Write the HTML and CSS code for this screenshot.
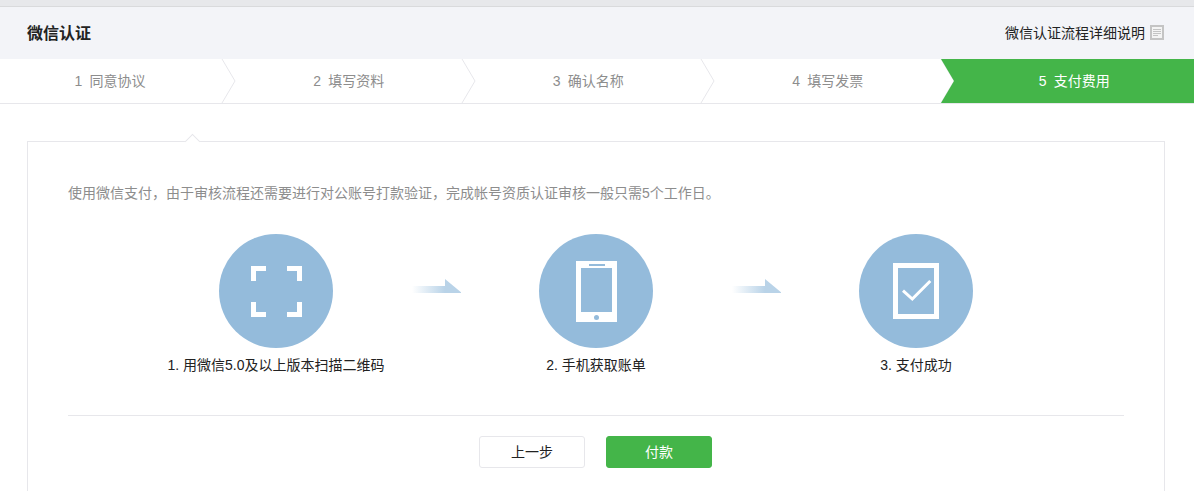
FILE: index.html
```html
<!DOCTYPE html>
<html>
<head>
  <meta charset="UTF-8" />
  <title>微信认证</title>
  <link rel="stylesheet" href="styles.css">
</head>
<body>

<div class="top-strip"></div>

<div class="page-head">
  <h1>微信认证</h1>
  <a class="help-link" href="#">
    微信认证流程详细说明
    <svg class="doc-icon" width="14" height="15" viewBox="0 0 14 15">
      <rect x="0" y="0" width="14" height="15" fill="#c4c4c4" />
      <rect x="2" y="2" width="10" height="11" fill="#f4f4f4" />
      <path d="M3 4.5h8M3 6.5h8M3 8.5h8M3 10.5h5" stroke="#c4c4c4" stroke-width="1" />
    </svg>
  </a>
</div>

<div class="steps">
  <div class="step"><span class="num">1</span>同意协议
    <svg class="chevron" width="15" height="44" viewBox="0 0 15 44"><path d="M1 0L14 22L1 44" fill="#fff" stroke="#e7e7eb" /></svg>
  </div>
  <div class="step"><span class="num">2</span>填写资料
    <svg class="chevron" width="15" height="44" viewBox="0 0 15 44"><path d="M1 0L14 22L1 44" fill="#fff" stroke="#e7e7eb" /></svg>
  </div>
  <div class="step"><span class="num">3</span>确认名称
    <svg class="chevron" width="15" height="44" viewBox="0 0 15 44"><path d="M1 0L14 22L1 44" fill="#fff" stroke="#e7e7eb" /></svg>
  </div>
  <div class="step"><span class="num">4</span>填写发票
    <svg class="chevron" width="15" height="44" viewBox="0 0 15 44"><path d="M1 0L14 22L1 44" fill="#fff" stroke="#e7e7eb" /></svg>
  </div>
  <div class="step step-current"><span class="num">5</span>支付费用</div>
</div>

<div class="main">
  <div class="card">
    <p class="intro">使用微信支付，由于审核流程还需要进行对公账号打款验证，完成帐号资质认证审核一般只需5个工作日。</p>

    <div class="flow">
      <div class="flow-item">
        <svg width="114" height="114" viewBox="0 0 114 114">
          <circle cx="57" cy="57" r="57" fill="#94bbdb" />
          <path d="M47 34.500H34.500V47M68 34.500H80.500V47M47 80.500H34.500V68M68 80.500H80.500V68" fill="none" stroke="#fff" stroke-width="5" />
        </svg>
        <div class="flow-label">1. 用微信5.0及以上版本扫描二维码</div>
      </div>
      <svg class="flow-arrow" width="50" height="16" viewBox="0 0 50 16">
        <defs>
          <linearGradient id="tail1" x1="0" x2="1" y1="0" y2="0">
            <stop offset="0" stop-color="#b9d3e8" stop-opacity="0" />
            <stop offset="1" stop-color="#b9d3e8" />
          </linearGradient>
        </defs>
        <rect x="1" y="8" width="33" height="7" fill="url(#tail1)" />
        <path d="M34 1L51 15H34Z" fill="#b9d3e8" />
      </svg>
      <div class="flow-item">
        <svg width="114" height="114" viewBox="0 0 114 114">
          <circle cx="57" cy="57" r="57" fill="#94bbdb" />
          <rect x="37" y="27" width="41" height="61" fill="#fff" />
          <rect x="42" y="34" width="31" height="44" fill="#94bbdb" />
          <rect x="50" y="30" width="16" height="2" fill="#94bbdb" />
          <circle cx="57.500" cy="83.500" r="2.500" fill="#94bbdb" />
        </svg>
        <div class="flow-label">2. 手机获取账单</div>
      </div>
      <svg class="flow-arrow" width="50" height="16" viewBox="0 0 50 16">
        <rect x="1" y="8" width="33" height="7" fill="url(#tail1)" />
        <path d="M34 1L51 15H34Z" fill="#b9d3e8" />
      </svg>
      <div class="flow-item">
        <svg width="114" height="114" viewBox="0 0 114 114">
          <circle cx="57" cy="57" r="57" fill="#94bbdb" />
          <rect x="36.500" y="31.500" width="41" height="51" fill="none" stroke="#fff" stroke-width="5" />
          <path d="M44 56.700L53.300 65L71.300 47" fill="none" stroke="#fff" stroke-width="3" />
        </svg>
        <div class="flow-label">3. 支付成功</div>
      </div>
    </div>

    <div class="actions">
      <a class="btn" href="#">上一步</a>
      <a class="btn btn-primary" href="#">付款</a>
    </div>
  </div>
</div>

</body>
</html>
```

FILE: styles.css
```css
html {
  overflow: hidden;
}
body {
  margin: 0;
  padding: 0;
  background-color: #ffffff;
  font-family: "Liberation Sans", "Noto Sans CJK SC", sans-serif;
  font-size: 14px;
  color: #222222;
}
a {
  text-decoration: none;
}
.top-strip {
  height: 6px;
  background-color: #e7e8eb;
  border-bottom: 1px solid #d9dadc;
}
.page-head {
  display: flex;
  justify-content: space-between;
  align-items: center;
  box-sizing: border-box;
  height: 52px;
  padding: 0 30px 2px 27px;
  background-color: #f3f4f8;
}
.page-head h1 {
  margin: 0;
  font-size: 16px;
  font-weight: bold;
  color: #222222;
}
.help-link {
  display: flex;
  align-items: center;
  gap: 5px;
  color: #222222;
}
.doc-icon {
  display: block;
}

/* step bar */
.steps {
  display: grid;
  grid-template-columns: 236px repeat(4, 1fr);
  height: 44px;
  border-bottom: 1px solid #e7e7eb;
}
.step {
  position: relative;
  padding-right: 14px;
  line-height: 44px;
  text-align: center;
  color: #8d8d8d;
}
.step:first-child {
  padding-right: 16px;
}
.step .num {
  margin-right: 7px;
}
.chevron {
  position: absolute;
  top: 0;
  right: 0;
}
.step-current {
  margin-left: -13.5px;
  padding-left: 13.5px;
  padding-right: 0;
  color: #ffffff;
  background-color: #44b549;
  clip-path: polygon(0 0, 100% 0, 100% 100%, 0 100%, 13px 50%);
}

/* main card */
.main {
  padding: 37px 29px 0 27px;
}
.card {
  position: relative;
  padding: 0 40px 40px 40px;
  border: 1px solid #e7e7eb;
}
.card::before {
  content: "";
  position: absolute;
  top: -6px;
  left: 159px;
  width: 10px;
  height: 10px;
  background-color: #ffffff;
  border-top: 1px solid #e7e7eb;
  border-left: 1px solid #e7e7eb;
  transform: rotate(45deg);
}
.intro {
  margin: 0;
  padding-top: 41px;
  line-height: 20px;
  color: #8d8d8d;
}
.flow {
  display: flex;
  justify-content: center;
  margin-top: 31px;
  padding-bottom: 40px;
  border-bottom: 1px solid #e7e7eb;
}
.flow-item {
  display: flex;
  flex-direction: column;
  align-items: center;
  width: 270px;
}
.flow-item svg {
  display: block;
}
.flow-label {
  margin-top: 7px;
  line-height: 20px;
  color: #222222;
}
.flow-arrow {
  flex: none;
  margin-top: 44px;
}
.actions {
  display: flex;
  justify-content: center;
  gap: 21px;
  margin-top: 20px;
  padding-right: 1px;
}
.btn {
  box-sizing: border-box;
  width: 106px;
  height: 32px;
  line-height: 30px;
  text-align: center;
  border: 1px solid #e7e7eb;
  border-radius: 3px;
  color: #222222;
  background-color: #ffffff;
}
.btn-primary {
  border-color: #44b549;
  background-color: #44b549;
  color: #ffffff;
}
```
